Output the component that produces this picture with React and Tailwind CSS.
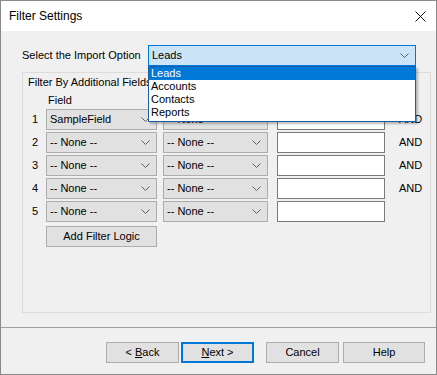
import React from "react";

const font = { fontFamily: '"Liberation Sans", Arial, sans-serif' };

function Chevron() {
  return (
    <svg width="9" height="5" viewBox="0 0 9 5" className="shrink-0">
      <polyline points="0.5,0.5 4.5,4.5 8.5,0.5" fill="none" stroke="#606060" strokeWidth="1" />
    </svg>
  );
}

function Combo({ value, className = "" }) {
  return (
    <div
      className={`flex h-[21px] items-center justify-between border border-[#adadad] bg-[#e1e1e1] pl-[3px] pr-[6px] text-[11px] text-black ${className}`}
    >
      <span>{value}</span>
      <Chevron />
    </div>
  );
}

function Button({ children, className = "", primary = false }) {
  return (
    <button
      className={`flex h-[21px] items-center justify-center bg-[#e1e1e1] text-[11px] text-black ${
        primary ? "border-2 border-[#0078d7]" : "border border-[#adadad]"
      } ${className}`}
    >
      {children}
    </button>
  );
}

const rows = [
  { n: 1, field: "SampleField", and: true },
  { n: 2, field: "-- None --", and: true },
  { n: 3, field: "-- None --", and: true },
  { n: 4, field: "-- None --", and: true },
  { n: 5, field: "-- None --", and: false },
];

export default function App() {
  return (
    <div style={font} className="flex h-[375px] w-[437px] flex-col border border-[#8a8a8a] bg-[#f0f0f0]">
      {/* title bar */}
      <div className="flex h-[30px] shrink-0 items-center justify-between bg-white pl-[8px] pr-[10px]">
        <span className="text-[12px] text-black">Filter Settings</span>
        <svg width="11" height="11" viewBox="0 0 11 11">
          <path d="M0.5 0.5 L10.5 10.5 M10.5 0.5 L0.5 10.5" stroke="#111" strokeWidth="1" />
        </svg>
      </div>

      {/* body */}
      <div className="relative flex h-[296px] shrink-0 flex-col pl-[21px]">
        <div className="mt-[14px] flex items-center">
          <span className="w-[126px] text-[11px] text-black">Select the Import Option</span>
          <div className="flex h-[21px] w-[268px] items-center justify-between border border-[#0078d7] bg-[#cce4f7] pl-[3px] pr-[6px] text-[11px] text-black">
            <span>Leads</span>
            <Chevron />
          </div>
        </div>

        {/* dropdown list */}
        <div className="absolute left-[147px] top-[35px] z-10 w-[268px] border border-[#1a5ea8] bg-white pb-[2px] text-[11px] leading-[13px] text-black shadow-[2px_2px_2px_rgba(0,0,0,0.25)]">
          <div className="bg-[#0078d7] pl-[2px] text-white">Leads</div>
          <div className="pl-[2px]">Accounts</div>
          <div className="pl-[2px]">Contacts</div>
          <div className="pl-[2px]">Reports</div>
        </div>

        {/* group box */}
        <div className="mt-[6px] h-[241px] w-[409px] border border-[#dcdcdc] pl-[5px] pt-[3px] text-[11px] text-black">
          <div className="leading-[13px]">Filter By Additional Fields</div>
          <div className="ml-[20px] mt-[5px] leading-[13px]">Field</div>
          <div className="mt-[2px] flex flex-col gap-[2px]">
            {rows.map((r) => (
              <div key={r.n} className="flex h-[21px] items-center">
                <span className="w-[18px] pl-[4px]">{r.n}</span>
                <Combo value={r.field} className="w-[111px]" />
                <Combo value="-- None --" className="ml-[6px] w-[105px]" />
                <div className="ml-[9px] h-[21px] w-[108px] border border-[#7a7a7a] bg-white" />
                {r.and && <span className="ml-[14px]">AND</span>}
              </div>
            ))}
          </div>
          <Button className="ml-[18px] mt-[4px] h-[18px] w-[111px]">Add Filter Logic</Button>
        </div>
      </div>

      {/* footer */}
      <div className="flex-1 border-t border-[#a0a0a0]">
        <div className="mt-[14px] flex items-center pl-[105px]">
          <Button className="w-[73px]">
            &lt;&nbsp;<span className="underline">B</span>ack
          </Button>
          <Button primary className="ml-[2px] w-[73px]">
            <span className="underline">N</span>ext &gt;
          </Button>
          <Button className="ml-[12px] w-[73px]">Cancel</Button>
          <Button className="ml-[4px] w-[82px]">Help</Button>
        </div>
      </div>
    </div>
  );
}
